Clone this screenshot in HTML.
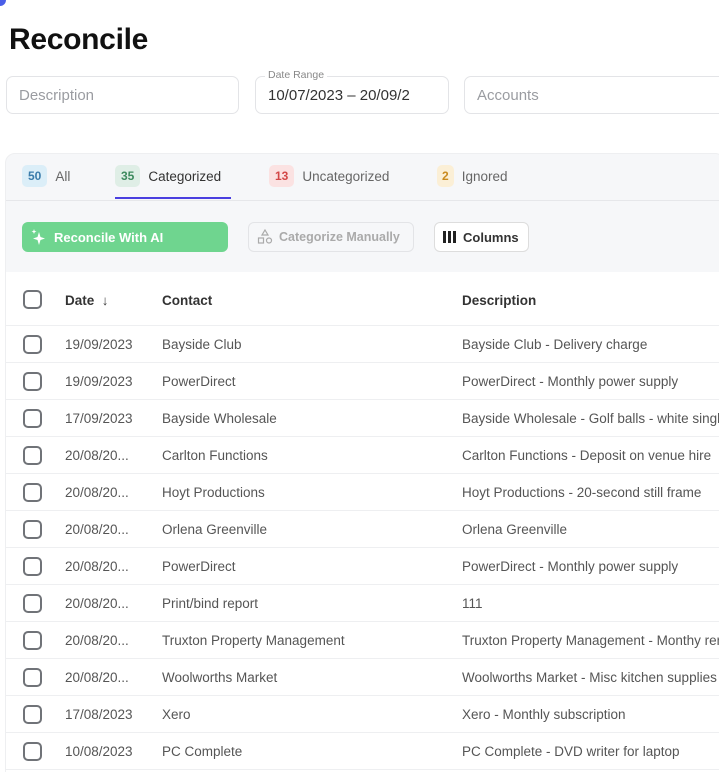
<!DOCTYPE html>
<html><head><style>
*{box-sizing:border-box;margin:0;padding:0}
html,body{width:719px;height:772px;overflow:hidden}
body{background:#fff;font-family:"Liberation Sans",sans-serif;position:relative;color:#222}
.abs{position:absolute}
h1{position:absolute;left:9px;top:23px;font-size:30px;font-weight:600;color:#111;letter-spacing:-0.3px}
.inp{position:absolute;top:76px;height:38px;border:1px solid #e3e4e7;border-radius:7px;font-size:15px;color:#9a9ca1;padding:10px 12px}
.panel{position:absolute;left:5px;top:153px;width:720px;height:640px;background:#f6f7f9;border-radius:10px;border:1px solid #eeeff1}
.tab{position:absolute;top:165px;font-size:13.5px;color:#666;display:flex;align-items:center;gap:8px}
.badge{display:inline-block;height:22px;line-height:22px;border-radius:5px;padding:0 6px;font-size:12px;font-weight:bold}
.btn{position:absolute;top:222px;height:30px;border-radius:6px;font-size:13px;display:flex;align-items:center;padding:0 8px;gap:6px}
.table{position:absolute;left:6px;top:272px;width:720px;height:520px;background:#fff}
.row{position:absolute;left:0;width:720px;height:37px;border-bottom:1px solid #eeeff1;font-size:13.5px;color:#555}
.row span{position:absolute;top:11px;white-space:nowrap}
.cb{position:absolute;left:17px;top:9px;width:19px;height:19px;border:2px solid #707378;border-radius:5px}
</style></head><body>
<div class="abs" style="left:0;top:0;width:6px;height:6px;background:#4a5ee8;border-radius:0 0 6px 0"></div>
<h1>Reconcile</h1>
<div class="inp" style="left:6px;width:233px">Description</div>
<div class="inp" style="left:255px;width:194px;color:#333">10/07/2023 – 20/09/2</div>
<div class="abs" style="left:265px;top:69px;font-size:10.5px;color:#888;background:#fff;padding:0 3px">Date Range</div>
<div class="inp" style="left:464px;width:270px">Accounts</div>
<div class="panel"></div>
<div class="tab" style="left:22px"><span class="badge" style="background:#dbeef8;color:#3a7cab">50</span>All</div>
<div class="tab" style="left:115px;color:#333"><span class="badge" style="background:#dfeee6;color:#3d8a5e">35</span>Categorized</div>
<div class="abs" style="left:115px;top:197px;width:116px;height:2px;background:#4a3fe0"></div>
<div class="tab" style="left:269px"><span class="badge" style="background:#fbe2e2;color:#d34848">13</span>Uncategorized</div>
<div class="tab" style="left:437px"><span class="badge" style="background:#fbefd6;color:#c98a1e;padding:0 5px">2</span>Ignored</div>
<div class="abs" style="left:6px;top:200px;width:720px;height:1px;background:#e6e7ea"></div>
<div class="btn" style="left:22px;width:206px;background:#6fd58f;color:#fff;font-weight:bold">
<svg width="18" height="18" viewBox="0 0 18 18" fill="#fff"><path d="M9 4 L10.5 9 L15 10.5 L10.5 12 L9 17 L7.5 12 L3 10.5 L7.5 9Z"/><path d="M4 1 L4.7 3 L6.5 3.5 L4.7 4.2 L4 6 L3.3 4.2 L1.5 3.5 L3.3 3Z"/></svg>Reconcile With AI</div>
<div class="btn" style="left:248px;width:166px;border:1px solid #e3e4e7;color:#aaa;font-weight:bold;font-size:12.5px">
<svg width="16" height="16" viewBox="0 0 16 16" fill="none" stroke="#aaa" stroke-width="1.2"><path d="M8 1 L11 6 H5Z"/><rect x="1.5" y="9" width="5" height="5"/><circle cx="12" cy="11.5" r="2.5"/></svg>Categorize Manually</div>
<div class="btn" style="left:434px;width:95px;border:1px solid #ddd;background:#fff;color:#333;font-weight:bold">
<svg width="14" height="12" viewBox="0 0 14 12" fill="#222"><rect x="0" y="0" width="3" height="12"/><rect x="5" y="0" width="3" height="12"/><rect x="10" y="0" width="3" height="12"/></svg>Columns</div>
<div class="table">
<div class="row" style="top:8px;height:46px;color:#333;font-weight:bold"><div class="cb" style="top:10px"></div><span style="left:59px;top:13px">Date &nbsp;↓</span><span style="left:156px;top:13px">Contact</span><span style="left:456px;top:13px">Description</span></div>
<div class="row" style="top:54px"><div class="cb"></div><span style="left:59px">19/09/2023</span><span style="left:156px">Bayside Club</span><span style="left:456px">Bayside Club - Delivery charge</span></div>
<div class="row" style="top:91px"><div class="cb"></div><span style="left:59px">19/09/2023</span><span style="left:156px">PowerDirect</span><span style="left:456px">PowerDirect - Monthly power supply</span></div>
<div class="row" style="top:128px"><div class="cb"></div><span style="left:59px">17/09/2023</span><span style="left:156px">Bayside Wholesale</span><span style="left:456px">Bayside Wholesale - Golf balls - white single</span></div>
<div class="row" style="top:165px"><div class="cb"></div><span style="left:59px">20/08/20...</span><span style="left:156px">Carlton Functions</span><span style="left:456px">Carlton Functions - Deposit on venue hire</span></div>
<div class="row" style="top:202px"><div class="cb"></div><span style="left:59px">20/08/20...</span><span style="left:156px">Hoyt Productions</span><span style="left:456px">Hoyt Productions - 20-second still frame</span></div>
<div class="row" style="top:239px"><div class="cb"></div><span style="left:59px">20/08/20...</span><span style="left:156px">Orlena Greenville</span><span style="left:456px">Orlena Greenville</span></div>
<div class="row" style="top:276px"><div class="cb"></div><span style="left:59px">20/08/20...</span><span style="left:156px">PowerDirect</span><span style="left:456px">PowerDirect - Monthly power supply</span></div>
<div class="row" style="top:313px"><div class="cb"></div><span style="left:59px">20/08/20...</span><span style="left:156px">Print/bind report</span><span style="left:456px">111</span></div>
<div class="row" style="top:350px"><div class="cb"></div><span style="left:59px">20/08/20...</span><span style="left:156px">Truxton Property Management</span><span style="left:456px">Truxton Property Management - Monthy rent</span></div>
<div class="row" style="top:387px"><div class="cb"></div><span style="left:59px">20/08/20...</span><span style="left:156px">Woolworths Market</span><span style="left:456px">Woolworths Market - Misc kitchen supplies</span></div>
<div class="row" style="top:424px"><div class="cb"></div><span style="left:59px">17/08/2023</span><span style="left:156px">Xero</span><span style="left:456px">Xero - Monthly subscription</span></div>
<div class="row" style="top:461px"><div class="cb"></div><span style="left:59px">10/08/2023</span><span style="left:156px">PC Complete</span><span style="left:456px">PC Complete - DVD writer for laptop</span></div>
</div>
</body></html>
